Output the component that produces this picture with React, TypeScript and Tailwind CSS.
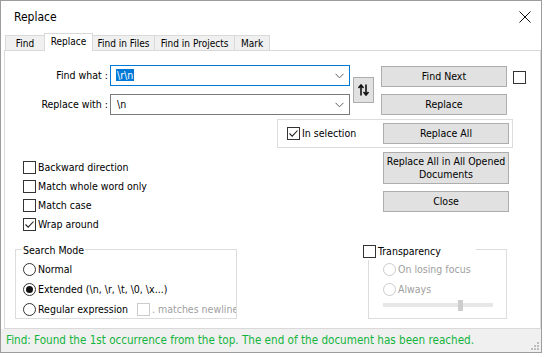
import React from "react";

const font = "font-['DejaVu_Sans_Condensed','DejaVu_Sans',sans-serif]";

function Check({ checked = false, disabled = false }: { checked?: boolean; disabled?: boolean }) {
  return (
    <span
      className={`flex items-center justify-center w-[13px] h-[13px] shrink-0 border bg-white ${
        disabled ? "border-[#cccccc]" : "border-[#333333]"
      }`}
    >
      {checked && (
        <svg width="11" height="11" viewBox="0 0 11 11">
          <path d="M1.5 5.5 L4.2 8.2 L9.5 2.5" fill="none" stroke="#222" strokeWidth="1.1" />
        </svg>
      )}
    </span>
  );
}

function Radio({ checked = false, disabled = false }: { checked?: boolean; disabled?: boolean }) {
  return (
    <span
      className={`flex items-center justify-center w-[13px] h-[13px] shrink-0 rounded-full border bg-white ${
        disabled ? "border-[#cccccc]" : "border-[#333333]"
      }`}
    >
      {checked && <span className="w-[7px] h-[7px] rounded-full bg-[#111111]" />}
    </span>
  );
}

function Btn({ label, className = "" }: { label: React.ReactNode; className?: string }) {
  return (
    <div
      className={`flex items-center justify-center w-[126px] bg-[#e1e1e1] border border-[#adadad] text-center leading-[13px] ${className}`}
    >
      {label}
    </div>
  );
}

function Combo({ value, focused = false }: { value: React.ReactNode; focused?: boolean }) {
  return (
    <div
      className={`flex items-center w-[240px] h-[21px] bg-white border pl-[5px] pr-[5px] ${
        focused ? "border-[#0078d7]" : "border-[#7a7a7a]"
      }`}
    >
      <div className="flex-1">{value}</div>
      <svg width="9" height="6" viewBox="0 0 9 6">
        <path d="M0.5 0.8 L4.5 4.8 L8.5 0.8" fill="none" stroke="#606060" strokeWidth="1" />
      </svg>
    </div>
  );
}

const tabs = [
  { name: "Find", w: "w-[40px]" },
  { name: "Replace", w: "w-[49px]", active: true },
  { name: "Find in Files", w: "w-[63px]" },
  { name: "Find in Projects", w: "w-[81px]" },
  { name: "Mark", w: "w-[36px]" },
];

export default function App() {
  return (
    <div className={`w-[548px] h-[357px] bg-white text-[10.5px] text-black ${font}`}>
      <div className="flex flex-col w-[542px] h-[353px] border border-[#9c9c9c] bg-white">
        {/* title bar */}
        <div className="flex items-center justify-between h-[32px] pl-[13px] pr-[10px] shrink-0">
          <span className="text-[12px]">Replace</span>
          <svg width="12" height="12" viewBox="0 0 12 12">
            <path d="M0.5 0.5 L11.5 11.5 M11.5 0.5 L0.5 11.5" stroke="#111" strokeWidth="1" />
          </svg>
        </div>

        {/* tabs */}
        <div className="flex items-end h-[17px] pl-[4px] shrink-0 text-[10px]">
          {tabs.map((t) => (
            <div
              key={t.name}
              className={`flex items-center justify-center -ml-px first:ml-0 border border-b-0 border-[#d9d9d9] ${t.w} ${
                t.active ? "h-[18px] bg-white relative z-10 -mb-px pb-[2px]" : "h-[15px] bg-[#f0f0f0]"
              }`}
            >
              {t.name}
            </div>
          ))}
        </div>

        {/* panel */}
        <div className="flex flex-col h-[279px] ml-[3px] border border-[#d9d9d9] bg-white shrink-0">
          {/* find / replace rows */}
          <div className="flex items-start pt-[14px]">
            <div className="flex flex-col gap-[8px]">
              <div className="flex items-center">
                <span className="w-[105px] text-right pr-[2px]">Find what :</span>
                <Combo
                  focused
                  value={<span className="bg-[#0078d7] text-white px-px">\r\n</span>}
                />
              </div>
              <div className="flex items-center">
                <span className="w-[105px] text-right pr-[2px]">Replace with :</span>
                <Combo value={<span className="px-px">\n</span>} />
              </div>
            </div>
            <div className="flex items-center justify-center ml-[3px] mt-[12px] w-[21px] h-[26px] bg-[#e1e1e1] border border-[#adadad]">
              <svg width="11" height="12" viewBox="0 0 11 12">
                <path d="M3 11.5 V1.5 M0.5 4 L3 1 L5.5 4" fill="none" stroke="#111" strokeWidth="1.6" />
                <path d="M8 0.5 V10.5 M5.5 8 L8 11 L10.5 8" fill="none" stroke="#111" strokeWidth="1.6" />
              </svg>
            </div>
            <div className="flex flex-col ml-[7px]">
              <Btn label="Find Next" className="mt-[1px] h-[21px] border-[#0078d7]" />
              <Btn label="Replace" className="mt-[7px] h-[21px]" />
            </div>
            <div className="ml-[6px] mt-[6px]">
              <Check />
            </div>
          </div>

          {/* in selection */}
          <div className="flex items-center ml-[272px] mt-[4px] w-[236px] h-[29px] border border-[#dcdcdc] pl-[9px] pr-[3px]">
            <Check checked />
            <span className="ml-[2px]">In selection</span>
            <Btn label="Replace All" className="ml-auto h-[21px]" />
          </div>

          {/* options + side buttons */}
          <div className="flex">
            <div className="flex flex-col gap-[6px] w-[378px] pl-[18px] mt-[13px]">
              {[
                ["Backward direction", false],
                ["Match whole word only", false],
                ["Match case", false],
                ["Wrap around", true],
              ].map(([label, on]) => (
                <div key={label as string} className="flex items-center h-[13px]">
                  <Check checked={on as boolean} />
                  <span className="ml-[2px]">{label}</span>
                </div>
              ))}
            </div>
            <div className="flex flex-col mt-[4px]">
              <Btn label={<>Replace All in All Opened<br />Documents</>} className="h-[32px]" />
              <Btn label="Close" className="mt-[7px] h-[21px]" />
            </div>
          </div>

          {/* groups */}
          <div className="flex mt-[18px]">
            <div className="relative ml-[10px] w-[222px] h-[70px] border border-[#dcdcdc] pl-[7px] pt-[13px]">
              <span className="absolute left-[6px] -top-[7px] bg-white px-px">Search Mode</span>
              <div className="flex flex-col gap-[7px]">
                <div className="flex items-center h-[13px]">
                  <Radio />
                  <span className="ml-[2px]">Normal</span>
                </div>
                <div className="flex items-center h-[13px]">
                  <Radio checked />
                  <span className="ml-[2px]">Extended (\n, \r, \t, \0, \x...)</span>
                </div>
                <div className="flex items-center h-[13px] overflow-hidden whitespace-nowrap">
                  <Radio />
                  <span className="ml-[2px] w-[99px] shrink-0">Regular expression</span>
                  <Check disabled />
                  <span className="ml-[2px] text-[#a0a0a0]">. matches newline</span>
                </div>
              </div>
            </div>

            <div className="relative ml-[131px] w-[139px] h-[70px] border border-[#dcdcdc] pl-[14px] pt-[13px]">
              <div className="absolute -left-[6px] -top-[6px] flex items-center bg-white pr-[35px]">
                <Check />
                <span className="ml-[2px]">Transparency</span>
              </div>
              <div className="flex flex-col gap-[7px] text-[#a0a0a0]">
                <div className="flex items-center h-[13px]">
                  <Radio disabled />
                  <span className="ml-[2px]">On losing focus</span>
                </div>
                <div className="flex items-center h-[13px]">
                  <Radio disabled />
                  <span className="ml-[2px]">Always</span>
                </div>
              </div>
              <div className="relative mt-[4px] w-[110px] h-[11px]">
                <div className="absolute left-0 right-0 top-[3px] h-[4px] bg-[#e7e7e7]" />
                <div className="absolute left-[75px] top-0 w-[5px] h-[11px] bg-[#cdcdcd]" />
              </div>
            </div>
          </div>
        </div>

        {/* status bar */}
        <div className="relative flex items-center flex-1 bg-[#f0f0f0] pl-[5px] text-[11.6px] text-[#14b43c]">
          <span>Find: Found the 1st occurrence from the top. The end of the document has been reached.</span>
          <svg className="absolute right-[2px] bottom-[2px]" width="8" height="8" viewBox="0 0 8 8">
            <rect x="6" y="0" width="2" height="2" fill="#bdbdbd" />
            <rect x="3" y="3" width="2" height="2" fill="#bdbdbd" />
            <rect x="6" y="3" width="2" height="2" fill="#bdbdbd" />
            <rect x="0" y="6" width="2" height="2" fill="#bdbdbd" />
            <rect x="3" y="6" width="2" height="2" fill="#bdbdbd" />
            <rect x="6" y="6" width="2" height="2" fill="#bdbdbd" />
          </svg>
        </div>
      </div>
    </div>
  );
}
